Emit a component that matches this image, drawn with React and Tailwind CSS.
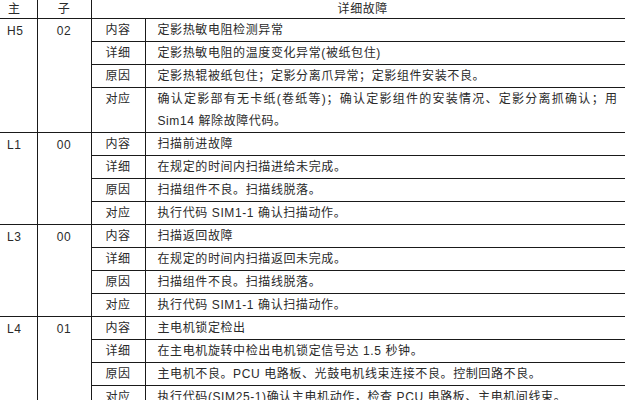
import React from 'react'

const faults = [
  {
    main: 'H5',
    sub: '02',
    rows: [
      ['内容', '定影热敏电阻检测异常'],
      ['详细', '定影热敏电阻的温度变化异常(被纸包住)'],
      ['原因', '定影热辊被纸包住；定影分离爪异常；定影组件安装不良。'],
      ['对应', null],
    ],
  },
  {
    main: 'L1',
    sub: '00',
    rows: [
      ['内容', '扫描前进故障'],
      ['详细', '在规定的时间内扫描进给未完成。'],
      ['原因', '扫描组件不良。扫描线脱落。'],
      ['对应', '执行代码 SIM1-1 确认扫描动作。'],
    ],
  },
  {
    main: 'L3',
    sub: '00',
    rows: [
      ['内容', '扫描返回故障'],
      ['详细', '在规定的时间内扫描返回未完成。'],
      ['原因', '扫描组件不良。扫描线脱落。'],
      ['对应', '执行代码 SIM1-1 确认扫描动作。'],
    ],
  },
  {
    main: 'L4',
    sub: '01',
    rows: [
      ['内容', '主电机锁定检出'],
      ['详细', '在主电机旋转中检出电机锁定信号达 1.5 秒钟。'],
      ['原因', '主电机不良。PCU 电路板、光鼓电机线束连接不良。控制回路不良。'],
      ['对应', '执行代码(SIM25-1)确认主电机动作，检查 PCU 电路板、主电机间线束。'],
    ],
  },
]

const cell = 'border border-[#1a1a1a] h-[23px] p-0 leading-[22px] align-top'

export default function App() {
  return (
    <div
      className="w-[625px] h-[400px] overflow-hidden bg-white text-[#2a2a2a] text-[12px] tracking-[0.6px]"
      style={{ fontFamily: '"Liberation Sans", "Noto Sans CJK SC", sans-serif' }}
    >
      <table className="w-[635px] table-fixed border-collapse -mt-px">
        <colgroup>
          <col className="w-[37px]" />
          <col className="w-[54px]" />
          <col className="w-[54px]" />
          <col />
        </colgroup>
        <tbody>
          <tr>
            <td className="border border-[#1a1a1a] border-l-0 h-[19px] p-0 pl-[8px] leading-[18px] align-middle">主</td>
            <td className="border border-[#1a1a1a] h-[19px] p-0 leading-[18px] text-center align-middle">子</td>
            <td colSpan={2} className="border border-[#1a1a1a] h-[19px] p-0 leading-[18px] text-center align-middle">
              详细故障
            </td>
          </tr>
          {faults.map(f =>
            f.rows.map(([label, text], i) => (
              <tr key={f.main + label}>
                {i === 0 && (
                  <>
                    <td rowSpan={4} className={cell + ' border-l-0 pl-[7px] pt-[1px]'}>{f.main}</td>
                    <td rowSpan={4} className={cell + ' text-center pt-[1px]'}>{f.sub}</td>
                  </>
                )}
                <td className={cell + ' text-center'}>{label}</td>
                <td className={cell + ' pl-[12px] pr-[14px] whitespace-nowrap'}>
                  {text ?? (
                    <>
                      <span className="block text-justify [text-align-last:justify] w-[460px]">
                        确认定影部有无卡纸(卷纸等)；确认定影组件的安装情况、定影分离抓确认；用
                      </span>
                      <span className="block">Sim14 解除故障代码。</span>
                    </>
                  )}
                </td>
              </tr>
            ))
          )}
        </tbody>
      </table>
    </div>
  )
}
